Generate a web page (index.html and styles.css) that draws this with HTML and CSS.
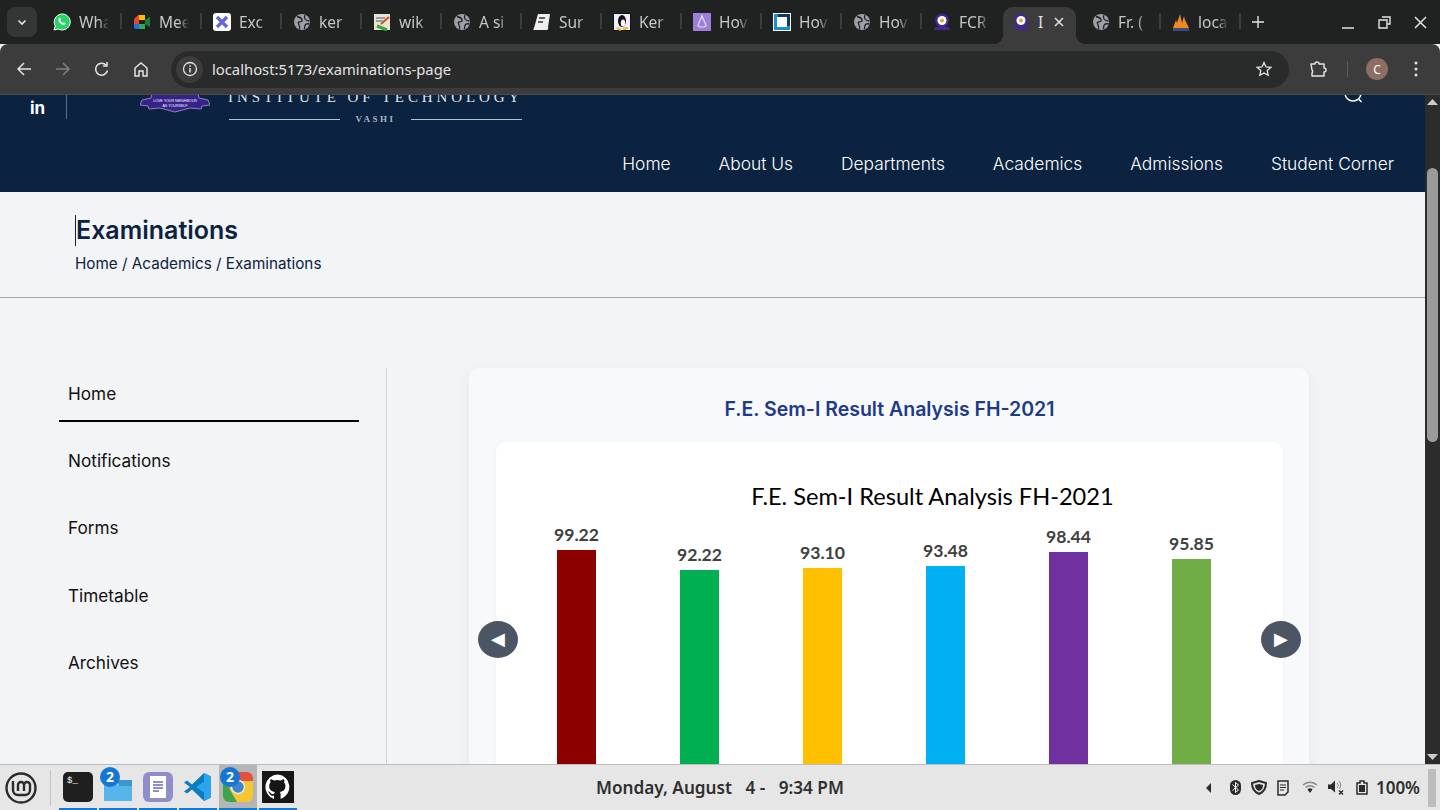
FILE: index.html
```html
<!doctype html>
<html lang="en">
<head>
    <meta charset="UTF-8">
    <title>Examinations</title>
    <link rel="stylesheet" href="styles.css">
</head>
<body>
    <div class="tabstrip">
        <button class="tab-search"><svg width="12" height="12" viewBox="0 0 12 12"><path d="M2.5 4.5 6 8l3.5-3.5" fill="none" stroke="#e3e3e3" stroke-width="1.6"/></svg></button>
        <div class="tab"><svg class="fav" viewBox="0 0 18 18"><path d="M1 17l1.2-4.2A8 8 0 1 1 5.4 16z" fill="#25d366" stroke="#fff" stroke-width="1"/><path d="M6 5c-1 1-.8 3 1 5s4 2.4 5 1.4l.6-1.100-2-1.100-.9.8c-1-.3-2-1.400-2.400-2.400l.8-.9-1-2z" fill="#fff"/></svg><span class="tab-name">Wha</span></div>
        <div class="tab"><svg class="fav" viewBox="0 0 18 18"><path d="M1 6l4-4h7v5H6v4H1z" fill="#ea4335"/><path d="M1 11h5v5H3a2 2 0 0 1-2-2z" fill="#1a73e8"/><path d="M6 11h6v5H6z" fill="#34a853"/><path d="M6 2h6v5H6z" fill="#fbbc04"/><path d="M12 7l5-3v10l-5-3z" fill="#188038"/></svg><span class="tab-name">Mee</span></div>
        <div class="tab"><svg class="fav" viewBox="0 0 18 18"><rect width="18" height="18" rx="3" fill="#fff"/><path d="M4 4l10 10M14 4L4 14" stroke="#6965db" stroke-width="3.4"/></svg><span class="tab-name">Exc</span></div>
        <div class="tab"><svg class="fav" viewBox="0 0 18 18"><use href="#globe"/></svg><span class="tab-name">ker</span></div>
        <div class="tab"><svg class="fav" viewBox="0 0 18 18"><rect x="1" y="1" width="16" height="16" fill="#e8e4d0"/><path d="M3 5h9M3 8h7" stroke="#789" stroke-width="1.4"/><path d="M8 11l8-7" stroke="#d64b2a" stroke-width="2"/><path d="M4 13l10 4" stroke="#3aa53a" stroke-width="3"/></svg><span class="tab-name">wik</span></div>
        <div class="tab"><svg class="fav" viewBox="0 0 18 18"><use href="#globe"/></svg><span class="tab-name">A si</span></div>
        <div class="tab"><svg class="fav" viewBox="0 0 18 18"><path d="M5 1h12l-2 13a2 2 0 0 1-2 3H2a1 1 0 0 1-1-2z" fill="#eee"/><path d="M6 5h6M5 9h5" stroke="#333" stroke-width="1.5"/></svg><span class="tab-name">Sur</span></div>
        <div class="tab"><svg class="fav" viewBox="0 0 18 18"><rect width="18" height="18" fill="#111"/><rect x="1" y="1" width="16" height="16" fill="#eef"/><ellipse cx="9" cy="8" rx="4" ry="6" fill="#111"/><ellipse cx="10" cy="10" rx="2.2" ry="3.5" fill="#fff"/><path d="M4 15l4 2M10 16l5-1" stroke="#f5b81f" stroke-width="2.5"/></svg><span class="tab-name">Ker</span></div>
        <div class="tab"><svg class="fav" viewBox="0 0 18 18"><rect width="18" height="18" fill="#9b7fd8"/><path d="M9 3c-1 3-4 8-4 10l2 1h4l2-1c0-2-3-7-4-10z" fill="none" stroke="#e8e0f8" stroke-width="1.2"/></svg><span class="tab-name">Hov</span></div>
        <div class="tab"><svg class="fav" viewBox="0 0 18 18"><rect width="18" height="18" fill="#fff"/><rect x="1" y="1" width="16" height="16" fill="#1b8ccd"/><path d="M5 1h12v12h-3V4H5z" fill="#0d3b66"/><rect x="4" y="4" width="10" height="10" fill="#fff"/></svg><span class="tab-name">Hov</span></div>
        <div class="tab"><svg class="fav" viewBox="0 0 18 18"><use href="#globe"/></svg><span class="tab-name">Hov</span></div>
        <div class="tab"><svg class="fav" viewBox="0 0 18 18"><use href="#crest-icon"/></svg><span class="tab-name">FCR</span></div>
        <div class="tab tab-active"><svg class="fav" viewBox="0 0 18 18"><use href="#crest-icon"/></svg><span class="tab-name">I</span><svg class="tab-close" width="10" height="10" viewBox="0 0 10 10"><path d="M1 1l8 8M9 1L1 9" stroke="#e3e3e3" stroke-width="1.5"/></svg></div>
        <div class="tab tab-after"><svg class="fav" viewBox="0 0 18 18"><use href="#globe"/></svg><span class="tab-name">Fr. (</span></div>
        <div class="tab"><svg class="fav" viewBox="0 0 18 18"><path d="M1 15l3-8 1 3 3-9 2 9 2-7 1 4 4 8z" fill="#f08a1d"/><path d="M1 15h16v3H1z" fill="#3c4a8c"/></svg><span class="tab-name">loca</span></div>
        <svg class="new-tab" width="12" height="12" viewBox="0 0 12 12"><path d="M6 0v12M0 6h12" stroke="#e3e3e3" stroke-width="1.4"/></svg>
        <div class="win-controls">
            <svg width="13" height="13" viewBox="0 0 13 13"><path d="M0 12h12" stroke="#e3e3e3" stroke-width="1.5"/></svg>
            <svg width="13" height="13" viewBox="0 0 13 13"><path d="M4 1h8v7H9M1 4h8v8H1z" fill="none" stroke="#e3e3e3" stroke-width="1.4"/></svg>
            <svg width="13" height="13" viewBox="0 0 13 13"><path d="M1 1l11 11M12 1L1 12" stroke="#e3e3e3" stroke-width="1.5"/></svg>
        </div>
    </div>

    <div class="toolbar">
        <svg class="tool" viewBox="0 0 16 16"><path d="M15 8H2M8 2L2 8l6 6" fill="none" stroke="#e3e3e3" stroke-width="1.5"/></svg>
        <svg class="tool" viewBox="0 0 16 16"><path d="M1 8h13M8 2l6 6-6 6" fill="none" stroke="#7d7f80" stroke-width="1.5"/></svg>
        <svg class="tool" viewBox="0 0 16 16"><path d="M13.5 9.5A6 6 0 1 1 12 4M13 1v4H9" fill="none" stroke="#e3e3e3" stroke-width="1.5"/></svg>
        <svg class="tool" viewBox="0 0 16 16"><path d="M2 7l6-5 6 5v8h-4v-5H6v5H2z" fill="none" stroke="#e3e3e3" stroke-width="1.5"/></svg>
        <div class="omnibox">
            <span class="site-info"><svg width="16" height="16" viewBox="0 0 16 16"><circle cx="8" cy="8" r="6.5" fill="none" stroke="#e3e3e3" stroke-width="1.3"/><path d="M8 7v4.500M8 4.300v1.500" stroke="#e3e3e3" stroke-width="1.5"/></svg></span>
            <span class="url">localhost:5173/examinations-page</span>
            <svg class="star" width="16" height="16" viewBox="0 0 16 16"><path d="M8 1.500l2 4.400 4.800.5-3.600 3.200 1 4.700L8 11.900l-4.200 2.400 1-4.700L1.200 6.400 6 5.900z" fill="none" stroke="#e3e3e3" stroke-width="1.3"/></svg>
        </div>
        <svg class="ext" width="18" height="18" viewBox="0 0 18 18"><path d="M2 4h4a2 2 0 0 1 4 0h5v4a2 2 0 0 1 0 4v4H3v-3a2 2 0 0 0 0-3z" fill="none" stroke="#e3e3e3" stroke-width="1.5" stroke-linejoin="round"/></svg>
        <span class="tool-sep"></span>
        <span class="avatar">C</span>
        <svg class="dots" width="4" height="16" viewBox="0 0 4 16"><circle cx="2" cy="2" r="1.500" fill="#e3e3e3"/><circle cx="2" cy="8" r="1.500" fill="#e3e3e3"/><circle cx="2" cy="14" r="1.500" fill="#e3e3e3"/></svg>
    </div>

    <div class="viewport">
        <div class="page">
            <header class="site-header">
                <div class="brand-row">
                    <div class="social">
                        <span class="linkedin">in</span>
                    </div>
                    <svg class="crest" width="70" height="20" viewBox="0 0 70 20"><path d="M2 7l9-2 1-5h46l1 5 9 2 2 5-8 1-1 3-11-1-15 4-15-4-11 1-1-3-8-1z" fill="#37228a" stroke="#8f83bd"/><text x="35" y="9" class="crest-text">LOVE YOUR NEIGHBOUR</text><text x="35" y="14" class="crest-text">AS YOURSELF</text></svg>
                    <div class="institute">
                        <div class="institute-name">INSTITUTE OF TECHNOLOGY</div>
                        <div class="institute-place"><span class="rule"></span><span>VASHI</span><span class="rule"></span></div>
                    </div>
                    <svg class="search" width="22" height="22" viewBox="0 0 22 22"><circle cx="10" cy="6" r="8" fill="none" stroke="#fff" stroke-width="1.5"/><path d="M15.500 12l3 3" stroke="#fff" stroke-width="1.5"/></svg>
                </div>
                <nav class="main-nav">
                    <a>Home</a>
                    <a>About Us</a>
                    <a>Departments</a>
                    <a>Academics</a>
                    <a>Admissions</a>
                    <a>Student Corner</a>
                </nav>
            </header>

            <section class="page-title">
                <h1>Examinations</h1>
                <p>Home / Academics / Examinations</p>
            </section>

            <div class="content">
                <aside class="sidebar">
                    <ul>
                        <li class="active">Home</li>
                        <li>Notifications</li>
                        <li>Forms</li>
                        <li>Timetable</li>
                        <li>Archives</li>
                    </ul>
                </aside>
                <main class="main">
                    <div class="card">
                        <h2>F.E. Sem-I Result Analysis FH-2021</h2>
                        <div class="chart-wrap">
                            <div class="chart-title">F.E. Sem-I Result Analysis FH-2021</div>
                            <div class="bars">
                                <div class="bar-col"><span class="val">99.22</span><div class="bar bar-red" style="height: 240px"></div></div>
                                <div class="bar-col"><span class="val">92.22</span><div class="bar bar-green" style="height: 220px"></div></div>
                                <div class="bar-col"><span class="val">93.10</span><div class="bar bar-yellow" style="height: 222px"></div></div>
                                <div class="bar-col"><span class="val">93.48</span><div class="bar bar-blue" style="height: 224px"></div></div>
                                <div class="bar-col"><span class="val">98.44</span><div class="bar bar-purple" style="height: 238px"></div></div>
                                <div class="bar-col"><span class="val">95.85</span><div class="bar bar-lime" style="height: 231px"></div></div>
                            </div>
                        </div>
                        <button class="slide-btn slide-prev">◀</button>
                        <button class="slide-btn slide-next">▶</button>
                    </div>
                </main>
            </div>
        </div>
        <div class="scrollbar">
            <svg width="11" height="6" viewBox="0 0 11 6"><path d="M5.500 0L11 6H0z" fill="#ccc"/></svg>
            <div class="scroll-track"><div class="scroll-thumb"></div></div>
            <svg width="11" height="6" viewBox="0 0 11 6"><path d="M5.500 6L11 0H0z" fill="#ccc"/></svg>
        </div>
    </div>

    <footer class="taskbar">
        <svg class="mint" width="34" height="34" viewBox="0 0 34 34"><circle cx="17" cy="17" r="14.5" fill="none" stroke="#2b2b2b" stroke-width="2.4"/><path d="M9 10v9a5 5 0 0 0 5 5h7a5 5 0 0 0 5-5v-5a3 3 0 0 0-6 0v6M14 20v-6a3 3 0 0 1 6 0" fill="none" stroke="#2b2b2b" stroke-width="2.4"/></svg>
        <span class="task-sep"></span>
        <div class="task-app"><svg width="30" height="30" viewBox="0 0 30 30"><rect width="30" height="30" rx="5" fill="#1f1f1f"/><text x="4" y="11" class="term-text">$_</text></svg></div>
        <div class="task-app"><span class="task-badge">2</span><svg class="folder" width="28" height="21" viewBox="0 0 28 21"><path d="M0 3h12l3 3h13v15H0z" fill="#56b6ec"/><path d="M12 0h16v6H15z" fill="#3f96cc"/></svg></div>
        <div class="task-app"><svg width="30" height="30" viewBox="0 0 30 30"><rect width="30" height="30" rx="6" fill="#8f8ecb"/><rect x="7" y="4" width="16" height="22" fill="#fff"/><path d="M10 10h10M10 13h10M10 16h10M10 19h6" stroke="#6c6ab5" stroke-width="1.3"/></svg></div>
        <div class="task-app"><svg width="30" height="30" viewBox="0 0 30 30"><path d="M21 1l7 3.500v21L21 29 9 17.500l-5 4-3-2L7 15 1 10.500l3-2 5 4z" fill="#0a7cc4"/><path d="M21 1l7 3.500v21L21 29V9.500L13 15l8 5.500z" fill="#2ca5ec"/></svg></div>
        <div class="task-app task-app-on"><span class="task-badge">2</span><svg width="30" height="30" viewBox="0 0 30 30"><defs><clipPath id="chrome-box"><rect width="30" height="30" rx="6"/></clipPath></defs><g clip-path="url(#chrome-box)"><rect width="30" height="30" fill="#f6c632"/><path d="M0 0h30v9H15L6 16 0 12z" fill="#e0523f"/><path d="M0 10l6 6 8 14H0z" fill="#3da34d"/></g><circle cx="15" cy="15" r="6.500" fill="#3f84c9" stroke="#e6e6e6" stroke-width="1.5"/></svg></div>
        <div class="task-app"><svg width="32" height="32" viewBox="0 0 32 32"><rect width="32" height="32" fill="#161616"/><path d="M16 3.500a12.500 12.500 0 0 0-4 24.400v-3.400c-3.500.8-4.200-1.500-4.200-1.500-.6-1.400-1.400-1.800-1.400-1.800-1.100-.8.1-.8.1-.8 1.300.1 2 1.300 2 1.300 1.100 1.900 3 1.400 3.600 1 .1-.8.4-1.400.8-1.700-2.800-.3-5.700-1.400-5.700-6.200 0-1.400.5-2.500 1.300-3.300-.1-.3-.6-1.600.1-3.300 0 0 1.100-.3 3.500 1.300a12 12 0 0 1 6.400 0c2.400-1.600 3.500-1.300 3.500-1.300.7 1.700.2 3 .1 3.300.8.900 1.300 2 1.300 3.300 0 4.800-2.900 5.900-5.700 6.200.5.4.9 1.100.9 2.300v4.600A12.500 12.500 0 0 0 16 3.500z" fill="#fff"/></svg></div>
        <div class="clock">Monday, August &nbsp; 4 - &nbsp; 9:34 PM</div>
        <div class="tray">
            <svg class="tray-caret" width="5" height="10" viewBox="0 0 5 10"><path d="M5 0v10L0 5z" fill="#2b2b2b"/></svg>
            <svg class="tray-bt" width="11" height="15" viewBox="0 0 11 15"><rect width="11" height="15" rx="5.500" fill="#2b2b2b"/><path d="M2.500 4.500l6 5.500-3 2.500V2.500l3 2.500-6 5.500" fill="none" stroke="#fff" stroke-width="1"/></svg>
            <svg width="16" height="15" viewBox="0 0 16 15"><path d="M8 1l7 2c0 5-2 9-7 11C3 12 1 8 1 3z" fill="none" stroke="#2b2b2b" stroke-width="2"/><path d="M4 5l4-1 4 1c0 3-1 5-4 6-3-1-4-3-4-6z" fill="#2b2b2b"/></svg>
            <svg width="12" height="16" viewBox="0 0 12 16"><path d="M1 1h10v11l-3 3H1z" fill="none" stroke="#2b2b2b" stroke-width="1.5"/><path d="M3 5h6M3 7.500h6M3 10h4" stroke="#2b2b2b"/></svg>
            <svg class="tray-wifi" width="16" height="13" viewBox="0 0 16 13"><path d="M1 4a10 10 0 0 1 14 0M3.500 6.500a6.500 6.500 0 0 1 9 0" fill="none" stroke="#8a8a8a" stroke-width="1.5"/><path d="M5.500 8.500a3.500 3.500 0 0 1 5 0L8 12z" fill="#2b2b2b"/></svg>
            <svg width="16" height="15" viewBox="0 0 16 15"><path d="M0 4.500h3l4-4v12l-4-3.500H0z" fill="#2b2b2b"/><path d="M9 3c1.500 1 1.500 4 0 5M11 1c2 2 2 6 .5 8" fill="none" stroke="#8a8a8a"/><path d="M11 10.500l4 4M15 10.500l-4 4" stroke="#2b2b2b" stroke-width="1.4"/></svg>
            <svg class="tray-batt" width="12" height="15" viewBox="0 0 12 15"><path d="M1 3h3V1h4v2h3v11H1z" fill="none" stroke="#2b2b2b" stroke-width="1.5"/><rect x="3" y="5" width="6" height="7" fill="#2b2b2b"/></svg>
            <span class="battery">100%</span>
            <span class="tray-end"></span>
        </div>
    </footer>

    <svg class="defs" width="0" height="0">
        <defs>
            <symbol id="globe" viewBox="0 0 18 18"><circle cx="9" cy="9" r="8" fill="#9aa0a6"/><path d="M4 3.500c2 .5 4 1 5 3 .8 1.500-1 2.500-2.500 2.500S5 10 6 12c.6 1.200 1 2.500.5 4.500M16.500 8c-2 0-3.500-.5-4.500-2-.7-1-.5-3 0-4M16.500 11c-2-.5-4 0-4.500 1.500-.4 1.200-.5 2.500-.5 3.500" fill="none" stroke="#202124" stroke-width="1.3"/></symbol>
            <symbol id="crest-icon" viewBox="0 0 18 18"><circle cx="9" cy="7.500" r="7" fill="#3f2b8c"/><circle cx="9" cy="7.500" r="4.500" fill="#fff"/><circle cx="9" cy="7.500" r="2" fill="#e8a33c"/><path d="M2 14h14l1 3H1z" fill="#3f2b8c"/></symbol>
        </defs>
    </svg>
</body>
</html>
```
FILE: styles.css
```css
* {
    box-sizing: border-box;
}

html, body {
    margin: 0;
    height: 810px;
    overflow: hidden;
}

body {
    display: flex;
    flex-direction: column;
    width: 1440px;
    font-family: Inter, "Liberation Sans", sans-serif;
    background-color: #f3f4f6;
}

.defs {
    display: none;
}

/* browser tabs */
.tabstrip {
    flex: 0 0 44px;
    display: flex;
    align-items: flex-start;
    background-color: #202221;
    color: #c4c7c5;
    font-family: "Noto Sans", sans-serif;
    font-size: 15.5px;
    padding: 7px 0 0 7px;
}

.tab-search {
    width: 30px;
    height: 30px;
    margin-right: 5px;
    border: none;
    border-radius: 8px;
    background-color: #343635;
    display: flex;
    align-items: center;
    justify-content: center;
    padding: 0;
}

.tab {
    flex: 0 0 80px;
    height: 37px;
    display: flex;
    align-items: center;
    gap: 8px;
    padding: 0 0 7px 11px;
    position: relative;
}

.tab::after {
    content: "";
    position: absolute;
    right: 0;
    top: 6px;
    width: 2px;
    height: 16px;
    background-color: #3c3e3d;
}

.fav {
    flex: 0 0 18px;
    width: 18px;
    height: 18px;
}

.tab-name {
    width: 30px;
    white-space: nowrap;
    -webkit-mask-image: linear-gradient(90deg, #000 65%, transparent 100%);
    mask-image: linear-gradient(90deg, #000 65%, transparent 100%);
}

.tab:has(+ .tab-active)::after {
    display: none;
}

.tab-active {
    flex-basis: 73px;
    margin-left: 1px;
    padding-left: 9px;
    background-color: #3c3c3c;
    border-radius: 10px 10px 0 0;
    color: #e3e3e3;
}

.tab-active .tab-name {
    width: 9px;
    -webkit-mask-image: none;
    mask-image: none;
}

.tab-active::before,
.tab-active::after {
    content: "";
    position: absolute;
    top: auto;
    bottom: 0;
    width: 10px;
    height: 10px;
}

.tab-active::before {
    left: -10px;
    background: radial-gradient(circle at 0 0, transparent 10px, #3c3c3c 10.5px);
}

.tab-active::after {
    right: -10px;
    background: radial-gradient(circle at 100% 0, transparent 10px, #3c3c3c 10.5px);
}

.tab-close {
    margin-left: -1px;
}

.tab-after {
    margin-left: 5px;
}

.new-tab {
    margin: 9px 0 0 11px;
}

.win-controls {
    margin: 9px 0 0 auto;
    display: flex;
    gap: 23px;
    padding-right: 13px;
}

/* browser toolbar */
.toolbar {
    flex: 0 0 51px;
    display: flex;
    align-items: center;
    background-color: #3c3c3c;
    border-radius: 8px 8px 0 0;
    padding-left: 16px;
    border-bottom: 1px solid #4b4b4b;
}

.tool {
    width: 16px;
    height: 16px;
    margin-right: 23px;
}

.omnibox {
    width: 1118px;
    height: 37px;
    margin-left: -1px;
    display: flex;
    align-items: center;
    background-color: #292a2a;
    border-radius: 19px;
    padding: 0 17px 0 5px;
}

.site-info {
    width: 27px;
    height: 27px;
    border-radius: 50%;
    background-color: #3c3c3c;
    display: flex;
    align-items: center;
    justify-content: center;
    margin-right: 9px;
}

.url {
    flex: 1;
    color: #e3e3e3;
    font-family: "Noto Sans", sans-serif;
    font-size: 14.8px;
}

.ext {
    margin-left: 20px;
}

.tool-sep {
    width: 1px;
    height: 16px;
    margin: 0 18px 0 20px;
    background-color: #5a5a5a;
}

.avatar {
    width: 22px;
    height: 22px;
    border-radius: 50%;
    background-color: #8d6e63;
    color: #fff;
    font-family: "Noto Sans", sans-serif;
    font-size: 12px;
    display: flex;
    align-items: center;
    justify-content: center;
}

.dots {
    margin-left: 26px;
}

/* page area */
.viewport {
    flex: 1;
    display: flex;
    min-height: 0;
}

.page {
    flex: 1;
    min-width: 0;
    overflow: hidden;
}

.site-header {
    height: 97px;
    background-color: #0b2240;
    color: #fff;
    overflow: hidden;
}

.brand-row {
    display: flex;
    align-items: flex-start;
    height: 26px;
    padding-left: 30px;
}

.social {
    width: 37px;
    height: 24px;
    border-right: 1px solid #5f6f85;
}

.linkedin {
    font-size: 17px;
    font-weight: 700;
    line-height: 26px;
}

.crest {
    margin-left: 73px;
    margin-top: -2px;
    flex: none;
}

.crest-text {
    fill: #fff;
    font-family: "Liberation Sans", sans-serif;
    font-size: 3.6px;
    text-anchor: middle;
}

.institute {
    margin: -6px 0 0 19px;
    width: 293px;
    flex: none;
}

.institute-name {
    margin-left: -1px;
    font-family: "Liberation Serif", serif;
    font-size: 15px;
    letter-spacing: 3.9px;
    line-height: 16px;
    white-space: nowrap;
    color: #dfe4ea;
}

.institute-place {
    display: flex;
    align-items: center;
    justify-content: space-between;
    font-family: "Liberation Serif", serif;
    font-size: 9px;
    font-weight: 700;
    letter-spacing: 2.5px;
    line-height: 14px;
    color: #aab4c2;
    margin-top: 7px;
}

.rule {
    width: 111px;
    height: 1px;
    background-color: #b9c2ce;
}

.search {
    margin: -8px 60px 0 auto;
}

.main-nav {
    height: 71px;
    display: flex;
    justify-content: flex-end;
    align-items: flex-start;
    gap: 48px;
    padding: 31px 31px 0 0;
    font-size: 17.37px;
    font-weight: 300;
    line-height: 24px;
    color: #fff;
}

.page-title {
    height: 106px;
    padding: 23px 0 0 75px;
    border-bottom: 1px solid #a6a8b0;
    color: #0b2240;
}

.page-title h1 {
    margin: 0;
    font-size: 25px;
    line-height: 31px;
    font-weight: 600;
    border-left: 1px solid #0b2240;
}

.page-title p {
    margin: 8px 0 0;
    font-size: 15.25px;
    line-height: 20px;
}

.content {
    display: flex;
    padding: 70px 0 0 59px;
}

.sidebar {
    width: 328px;
    flex: none;
    padding-right: 27px;
    border-right: 1px solid #d1d5db;
    height: 400px;
}

.sidebar ul {
    list-style: none;
    margin: 0;
    padding: 0;
}

.sidebar li {
    height: 54px;
    margin-bottom: 13.2px;
    padding: 14px 9px 0;
    font-size: 17.2px;
    line-height: 24px;
    color: #111;
}

.sidebar li.active {
    border-bottom: 2px solid #000;
}

.main {
    flex: 1;
    padding-left: 82px;
}

.card {
    position: relative;
    width: 840px;
    height: 600px;
    padding: 27px 26px 0 27px;
    background-color: #f8f9fb;
    border-radius: 10px;
    box-shadow: 0 4px 14px rgba(0, 0, 0, 0.06);
}

.card h2 {
    margin: 0 0 19px;
    text-align: center;
    font-size: 19.5px;
    line-height: 28px;
    font-weight: 600;
    color: #1e3a8a;
}

.chart-wrap {
    height: 500px;
    background-color: #fff;
    border-radius: 10px;
    box-shadow: 0 1px 4px rgba(0, 0, 0, 0.04);
    padding: 38px 0 0 19px;
}

.chart-title {
    font-family: Lato, "Liberation Sans", sans-serif;
    font-size: 23.6px;
    line-height: 32px;
    color: #000;
    text-align: center;
    padding-left: 67px;
}

.bars {
    display: flex;
    align-items: flex-end;
    height: 278px;
}

.bar-col {
    flex: 0 0 123px;
    display: flex;
    flex-direction: column;
    align-items: center;
}

.val {
    font-family: Lato, "Liberation Sans", sans-serif;
    font-size: 17.6px;
    font-weight: 700;
    line-height: 22px;
    color: #404040;
    margin-bottom: 4px;
}

.bar {
    width: 39px;
}

.bar-red { background-color: #8c0000; }
.bar-green { background-color: #00b050; }
.bar-yellow { background-color: #ffc000; }
.bar-blue { background-color: #00b0f0; }
.bar-purple { background-color: #7030a0; }
.bar-lime { background-color: #70ad47; }

.slide-btn {
    position: absolute;
    top: 253px;
    width: 40px;
    height: 37px;
    border: none;
    border-radius: 50%;
    background-color: #4b5563;
    color: #fff;
    font-size: 18px;
    line-height: 37px;
    padding: 0;
}

.slide-prev { left: 9px; }
.slide-next { right: 8px; }

.scrollbar {
    flex: 0 0 15px;
    display: flex;
    flex-direction: column;
    align-items: center;
    background-color: #2c2c2c;
    padding: 4px 0;
}

.scroll-track {
    flex: 1;
    width: 100%;
    padding-top: 63px;
}

.scroll-thumb {
    width: 11px;
    height: 274px;
    margin: 0 auto;
    background-color: #9b9b9b;
    border-radius: 6px;
}

/* desktop panel */
.taskbar {
    flex: 0 0 46px;
    display: flex;
    align-items: center;
    position: relative;
    background-color: #e6e6e6;
    border-top: 1px solid #bdbdbd;
    padding-left: 4px;
    font-family: "Noto Sans", sans-serif;
}

.task-sep {
    width: 1px;
    height: 36px;
    margin: 0 8px 0 12px;
    background-color: #c4c4c4;
}

.task-app {
    position: relative;
    width: 38px;
    height: 45px;
    margin-right: 2px;
    display: flex;
    align-items: center;
    justify-content: center;
    border-bottom: 2px solid #1477d4;
}

.task-app-on {
    background-color: #b5b5b5;
}

.folder {
    margin-top: 8px;
}

.task-badge {
    position: absolute;
    left: 1px;
    top: 2px;
    width: 20px;
    height: 20px;
    border-radius: 50%;
    background-color: #1477d4;
    color: #fff;
    font-size: 14px;
    font-weight: 700;
    line-height: 20px;
    text-align: center;
    z-index: 1;
}

.term-text {
    fill: #fff;
    font-family: "Liberation Mono", monospace;
    font-size: 9px;
}

.clock {
    position: absolute;
    left: 596px;
    font-size: 17.2px;
    font-weight: 600;
    color: #2f2f2f;
    white-space: nowrap;
}

.tray {
    margin-left: auto;
    display: flex;
    align-items: center;
    gap: 10px;
    padding-right: 4px;
}

.tray-bt {
    margin-left: 9px;
}

.tray-wifi {
    margin-left: 3px;
}

.tray-batt {
    margin-left: 2px;
}

.battery {
    font-size: 17px;
    font-weight: 600;
    color: #2f2f2f;
    margin-left: -2px;
}

.tray-end {
    width: 8px;
    height: 38px;
    background-color: #bdbdbd;
    margin-left: -2px;
}
```
